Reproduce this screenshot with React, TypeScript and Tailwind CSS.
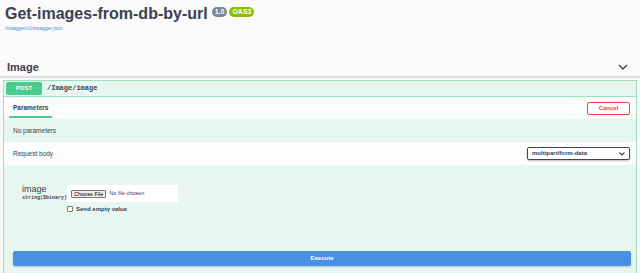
import React from "react";

function Chevron() {
  return (
    <svg width="10" height="6" viewBox="0 0 10 6" fill="none">
      <path d="M1 1l4 4 4-4" stroke="#3b4151" strokeWidth="1.3" />
    </svg>
  );
}

export default function App() {
  return (
    <div className="w-[640px] h-[273px] overflow-hidden bg-[#fafafa] font-['Liberation_Sans',Arial,sans-serif] text-[#3b4151]">
      {/* info header */}
      <header className="pl-[5px] pt-[3px]">
        <div className="flex items-start">
          <h1 className="text-[16px] leading-[22px] font-bold">Get-images-from-db-by-url</h1>
          <span className="ml-[4px] mt-[4px] h-[10px] px-[3px] rounded-[5px] bg-[#7d8492] text-white text-[7px] leading-[10px] font-bold">1.0</span>
          <span className="ml-[2px] mt-[4px] h-[10px] px-[3px] rounded-[5px] bg-[#89bf04] text-white text-[7px] leading-[10px] font-bold">OAS3</span>
        </div>
        <a className="block text-[5px] leading-[6px] text-[#4990e2]">/swagger/v1/swagger.json</a>
      </header>

      {/* tag section */}
      <div className="mt-[27px] flex items-center justify-between pl-[7px] pr-[12px] h-[20px] border-b-2 border-[#dcdfe4]">
        <h3 className="text-[11px] font-bold leading-[14px]">Image</h3>
        <Chevron />
      </div>

      <div className="mt-[2px] mx-[3px] border border-[#9adfbf] bg-[#e8f6f0]">
        {/* summary */}
        <div className="flex items-center h-[16px] pl-[2px] border-b border-[#9adfbf]">
          <span className="w-[36px] h-[13px] rounded-[2px] bg-[#49cc90] text-white text-[6px] font-bold leading-[13px] text-center">POST</span>
          <span className="ml-[5px] font-['Liberation_Mono',monospace] text-[7px] font-bold">/Image/image</span>
        </div>

        {/* parameters header */}
        <div className="flex items-center justify-between h-[22px] bg-white/80 pl-[5px] pr-[6px]">
          <div className="relative h-full flex items-center px-[4px]">
            <span className="text-[6.5px] font-bold">Parameters</span>
            <span className="absolute left-[0px] right-[0px] bottom-[1px] h-[2px] bg-[#49cc90]" />
          </div>
          <button className="w-[43px] h-[13px] rounded-[2px] border border-[#f93e3e] text-[#f93e3e] text-[6px] font-bold bg-transparent">Cancel</button>
        </div>

        <div className="h-[23px] flex items-center pl-[9px] text-[6.5px]">No parameters</div>

        {/* request body header */}
        <div className="flex items-center justify-between h-[23px] bg-white/80 pl-[9px] pr-[6px]">
          <span className="text-[6.5px]">Request body</span>
          <div className="w-[103px] h-[13px] rounded-[2px] border border-[#41444e] bg-white flex items-center justify-between px-[4px] shadow-[0_1px_2px_rgba(0,0,0,0.25)]">
            <span className="text-[6px] font-bold">multipart/form-data</span>
            <svg width="6" height="4" viewBox="0 0 6 4" fill="none">
              <path d="M0.5 0.5l2.5 2.5 2.5-2.5" stroke="#3b4151" strokeWidth="1.1" />
            </svg>
          </div>
        </div>

        {/* body */}
        <div className="pt-[19px] pl-[18px] flex">
          <div className="w-[45px]">
            <div className="text-[9px] leading-[10px] text-[#3b4151]">image</div>
            <div className="mt-[1px] font-['Liberation_Mono',monospace] text-[5px] leading-[6px] font-bold">string($binary)</div>
          </div>
          <div className="pt-[1px]">
            <div className="w-[111px] h-[17px] bg-white flex items-center pl-[4px]">
              <span className="h-[8px] px-[2px] border border-[#767676] rounded-[1px] bg-[#efefef] text-[5.5px] leading-[6px] text-black">Choose File</span>
              <span className="ml-[3px] text-[5.5px] text-[#3b4151]">No file chosen</span>
            </div>
            <label className="mt-[3px] flex items-center">
              <span className="w-[6px] h-[6px] border border-[#767676] rounded-[1px] bg-white" />
              <span className="ml-[3px] text-[6px] leading-[8px] font-bold">Send empty value</span>
            </label>
          </div>
        </div>

        <div className="pt-[30px] pb-[6px] pl-[9px] pr-[5px]">
          <button className="w-full h-[15px] rounded-[2px] bg-[#4990e2] border border-[#4990e2] text-white text-[6px] font-bold shadow-[0_1px_2px_rgba(0,0,0,0.2)]">Execute</button>
        </div>
      </div>
    </div>
  );
}
